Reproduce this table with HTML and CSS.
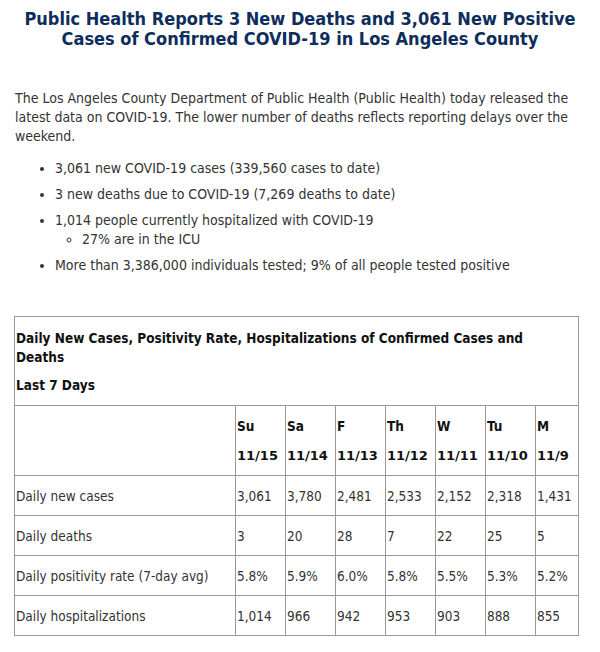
FILE: index.html
```html
<!DOCTYPE html>
<html>
<head>
<meta charset="utf-8">
<link rel="stylesheet" href="styles.css">
</head>
<body>
<h1 class="title">Public Health Reports 3 New Deaths and 3,061 New Positive<br>Cases of Confirmed COVID-19 in Los Angeles County</h1>
<p class="intro">The Los Angeles County Department of Public Health (Public Health) today released the latest data on COVID-19. The lower number of deaths reflects reporting delays over the weekend.</p>
<ul class="facts">
  <li>3,061 new COVID-19 cases (339,560 cases to date)</li>
  <li>3 new deaths due to COVID-19 (7,269 deaths to date)</li>
  <li>1,014 people currently hospitalized with COVID-19
    <ul class="sub"><li>27% are in the ICU</li></ul>
  </li>
  <li>More than 3,386,000 individuals tested; 9% of all people tested positive</li>
</ul>
<table class="data">
  <tr class="cap-row">
    <td colspan="8" class="cap">
      <p class="cap-title">Daily New Cases, Positivity Rate, Hospitalizations of Confirmed Cases and Deaths</p>
      <p class="cap-sub">Last 7 Days</p>
    </td>
  </tr>
  <tr class="head-row">
    <td class="label"></td>
    <td><span class="day">Su</span><span class="date">11/15</span></td>
    <td><span class="day">Sa</span><span class="date">11/14</span></td>
    <td><span class="day">F</span><span class="date">11/13</span></td>
    <td><span class="day">Th</span><span class="date">11/12</span></td>
    <td><span class="day">W</span><span class="date">11/11</span></td>
    <td><span class="day">Tu</span><span class="date">11/10</span></td>
    <td><span class="day">M</span><span class="date">11/9</span></td>
  </tr>
  <tr class="row">
    <td class="label">Daily new cases</td>
    <td>3,061</td><td>3,780</td><td>2,481</td><td>2,533</td><td>2,152</td><td>2,318</td><td>1,431</td>
  </tr>
  <tr class="row">
    <td class="label">Daily deaths</td>
    <td>3</td><td>20</td><td>28</td><td>7</td><td>22</td><td>25</td><td>5</td>
  </tr>
  <tr class="row">
    <td class="label">Daily positivity rate (7-day avg)</td>
    <td>5.8%</td><td>5.9%</td><td>6.0%</td><td>5.8%</td><td>5.5%</td><td>5.3%</td><td>5.2%</td>
  </tr>
  <tr class="row">
    <td class="label">Daily hospitalizations</td>
    <td>1,014</td><td>966</td><td>942</td><td>953</td><td>903</td><td>888</td><td>855</td>
  </tr>
</table>
</body>
</html>
```
FILE: styles.css
```css
html, body {
  margin: 0;
  padding: 0;
  background: #fff;
}
body {
  font-family: "DejaVu Sans Condensed", "DejaVu Sans", sans-serif;
  font-size: 14px;
  color: #333;
}
.title {
  margin: 9px 0 0;
  text-align: center;
  font-size: 18px;
  line-height: 20px;
  font-weight: bold;
  color: #0e2d5c;
}
.intro {
  margin: 40px 0 0 15px;
  width: 560px;
  line-height: 19px;
}
.facts {
  margin: 13px 0 0;
  padding-left: 55px;
  list-style: disc;
}
.facts > li {
  line-height: 19px;
  margin-bottom: 7px;
}
.sub {
  list-style: circle;
  margin: 0;
  padding-left: 27px;
}
.data {
  margin: 41px 0 0 14px;
  border-collapse: collapse;
  width: 565px;
  border: 1px solid #777;
  color: #333;
  font-size: 13.5px;
}
.data td {
  border: 1px solid #999;
  padding: 0 1px;
  vertical-align: middle;
  text-align: left;
}
.cap {
  height: 88px;
  color: #111;
}
.cap-title {
  margin: 0;
  font-weight: bold;
  line-height: 19px;
  width: 530px;
}
.cap-sub {
  margin: 10px 0 0;
  font-weight: bold;
}
.head-row td {
  height: 69px;
  color: #111;
}
.label {
  width: 218px;
}
.day {
  display: block;
  font-weight: bold;
  line-height: 20px;
}
.date {
  display: block;
  font-family: "DejaVu Sans", sans-serif;
  font-weight: bold;
  font-size: 13px;
  line-height: 20px;
  margin-top: 10px;
}
.row td {
  height: 39px;
}
```
